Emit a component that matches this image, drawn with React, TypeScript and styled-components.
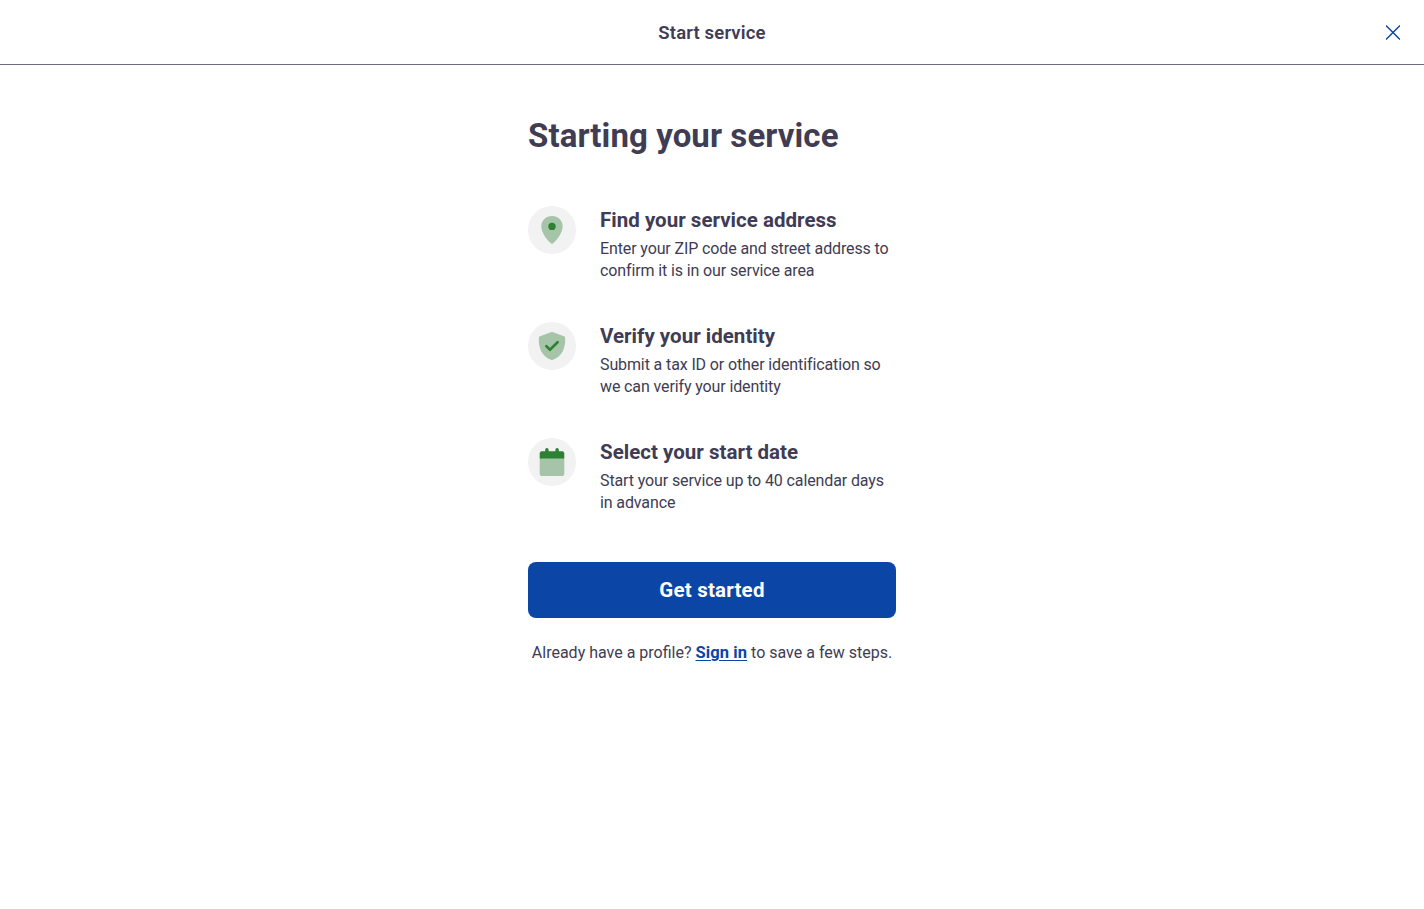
import type { ReactNode } from 'react';
import styled, { createGlobalStyle } from 'styled-components';

const GlobalStyle = createGlobalStyle`
  *, *::before, *::after {
    box-sizing: border-box;
  }

  body {
    margin: 0;
    background: #fff;
    color: #403c53;
    font-family: Roboto, 'Liberation Sans', sans-serif;
    font-size: 16px;
    line-height: 22px;
  }
`;

const Header = styled.header`
  display: grid;
  grid-template-columns: 1fr auto 1fr;
  align-items: center;
  height: 65px;
  padding: 0 24px;
  border-bottom: 1px solid #6f6c7d;
`;

const HeaderTitle = styled.span`
  grid-column: 2;
  padding-top: 2px;
  font-size: 18.5px;
  font-weight: 600;
  line-height: 24px;
  letter-spacing: 0.15px;
`;

const CloseButton = styled.button`
  display: flex;
  justify-self: end;
  padding: 0;
  border: none;
  background: none;
  color: #0b45a6;
  cursor: pointer;
`;

const Content = styled.main`
  width: 368px;
  margin: 0 auto;
  padding-top: 51px;
`;

const Title = styled.h1`
  margin: 0 0 50px;
  font-size: 33px;
  font-weight: 700;
  line-height: 40px;
  letter-spacing: 0.08px;
  white-space: nowrap;
`;

const Steps = styled.ul`
  display: flex;
  flex-direction: column;
  gap: 40px;
  margin: 0 0 48px;
  padding: 0;
  list-style: none;
`;

const Step = styled.li`
  display: flex;
  gap: 24px;
  height: 76px;
`;

const IconCircle = styled.div`
  display: flex;
  align-items: center;
  justify-content: center;
  flex: none;
  width: 48px;
  height: 48px;
  border-radius: 50%;
  background: #f2f2f2;
`;

const StepTitle = styled.h2`
  margin: 0 0 4px;
  font-size: 20.5px;
  font-weight: 700;
  line-height: 28px;
  letter-spacing: 0.02px;
`;

const StepText = styled.p`
  margin: 0;
  letter-spacing: -0.12px;
  white-space: nowrap;
`;

const Button = styled.button`
  width: 100%;
  height: 56px;
  border: none;
  border-radius: 8px;
  background: #0b45a6;
  color: #fff;
  font-family: inherit;
  font-size: 20.5px;
  font-weight: 700;
  letter-spacing: 0.2px;
  cursor: pointer;
`;

const Footer = styled.p`
  margin: 24px 0 0;
  text-align: center;
  white-space: nowrap;
`;

const Link = styled.a`
  color: #0b45a6;
  font-size: 16.5px;
  font-weight: 700;
  letter-spacing: 0.1px;
  text-decoration: underline;
  text-decoration-thickness: 1px;
  text-underline-offset: 2px;
`;

const PinIcon = () => (
  <svg width="32" height="32" viewBox="0 0 32 32">
    <path
      d="M16 2C10 2 5.300 6.500 5.300 12.300C5.300 18.500 10.500 25.500 15.200 29.600Q16 30.300 16.800 29.600C21.500 25.500 26.700 18.500 26.700 12.300C26.700 6.500 22 2 16 2Z"
      fill="#a5c4a8"
    />
    <circle cx="16" cy="12.400" r="3.700" fill="#2d8034" />
  </svg>
);

const ShieldIcon = () => (
  <svg width="32" height="32" viewBox="0 0 32 32">
    <path
      d="M15 2.200Q16 1.800 17 2.200L28 6.300Q29.200 6.800 29.200 8C29.500 18 26.500 26 17 29.800Q16 30.200 15 29.800C5.500 26 2.500 18 2.800 8Q2.800 6.800 4 6.300Z"
      fill="#a5c4a8"
    />
    <path
      d="M10.400 16.200L14 19.600L21.600 12.200"
      fill="none"
      stroke="#2d8034"
      strokeWidth="2.600"
      strokeLinecap="round"
    />
  </svg>
);

const CalendarIcon = () => (
  <svg width="32" height="32" viewBox="0 0 32 32">
    <path d="M3.700 12H28.300V28Q28.300 30 26.300 30H5.700Q3.700 30 3.700 28Z" fill="#a5c4a8" />
    <rect x="9.200" y="2" width="3.400" height="6" rx="1.700" fill="#2d8034" />
    <rect x="19.400" y="2" width="3.400" height="6" rx="1.700" fill="#2d8034" />
    <path d="M3.700 12.600V7.400Q3.700 5.200 5.900 5.200H26.100Q28.300 5.200 28.300 7.400V12.600Z" fill="#2d8034" />
  </svg>
);

const steps: { title: string; lines: string[]; icon: ReactNode }[] = [
  {
    title: 'Find your service address',
    lines: ['Enter your ZIP code and street address to', 'confirm it is in our service area'],
    icon: <PinIcon />,
  },
  {
    title: 'Verify your identity',
    lines: ['Submit a tax ID or other identification so', 'we can verify your identity'],
    icon: <ShieldIcon />,
  },
  {
    title: 'Select your start date',
    lines: ['Start your service up to 40 calendar days', 'in advance'],
    icon: <CalendarIcon />,
  },
];

export default function App() {
  return (
    <>
      <GlobalStyle />
      <Header>
        <HeaderTitle>Start service</HeaderTitle>
        <CloseButton type="button" aria-label="Close">
          <svg width="14" height="15" viewBox="0 0 14 15">
            <path d="M0 0.500L14 14.500M14 0.500L0 14.500" stroke="currentColor" strokeWidth="1.400" />
          </svg>
        </CloseButton>
      </Header>
      <Content>
        <Title>Starting your service</Title>
        <Steps>
          {steps.map((step) => (
            <Step key={step.title}>
              <IconCircle>{step.icon}</IconCircle>
              <div>
                <StepTitle>{step.title}</StepTitle>
                <StepText>
                  {step.lines[0]}
                  <br />
                  {step.lines[1]}
                </StepText>
              </div>
            </Step>
          ))}
        </Steps>
        <Button type="button">Get started</Button>
        <Footer>
          Already have a profile? <Link href="#">Sign in</Link> to save a few steps.
        </Footer>
      </Content>
    </>
  );
}
